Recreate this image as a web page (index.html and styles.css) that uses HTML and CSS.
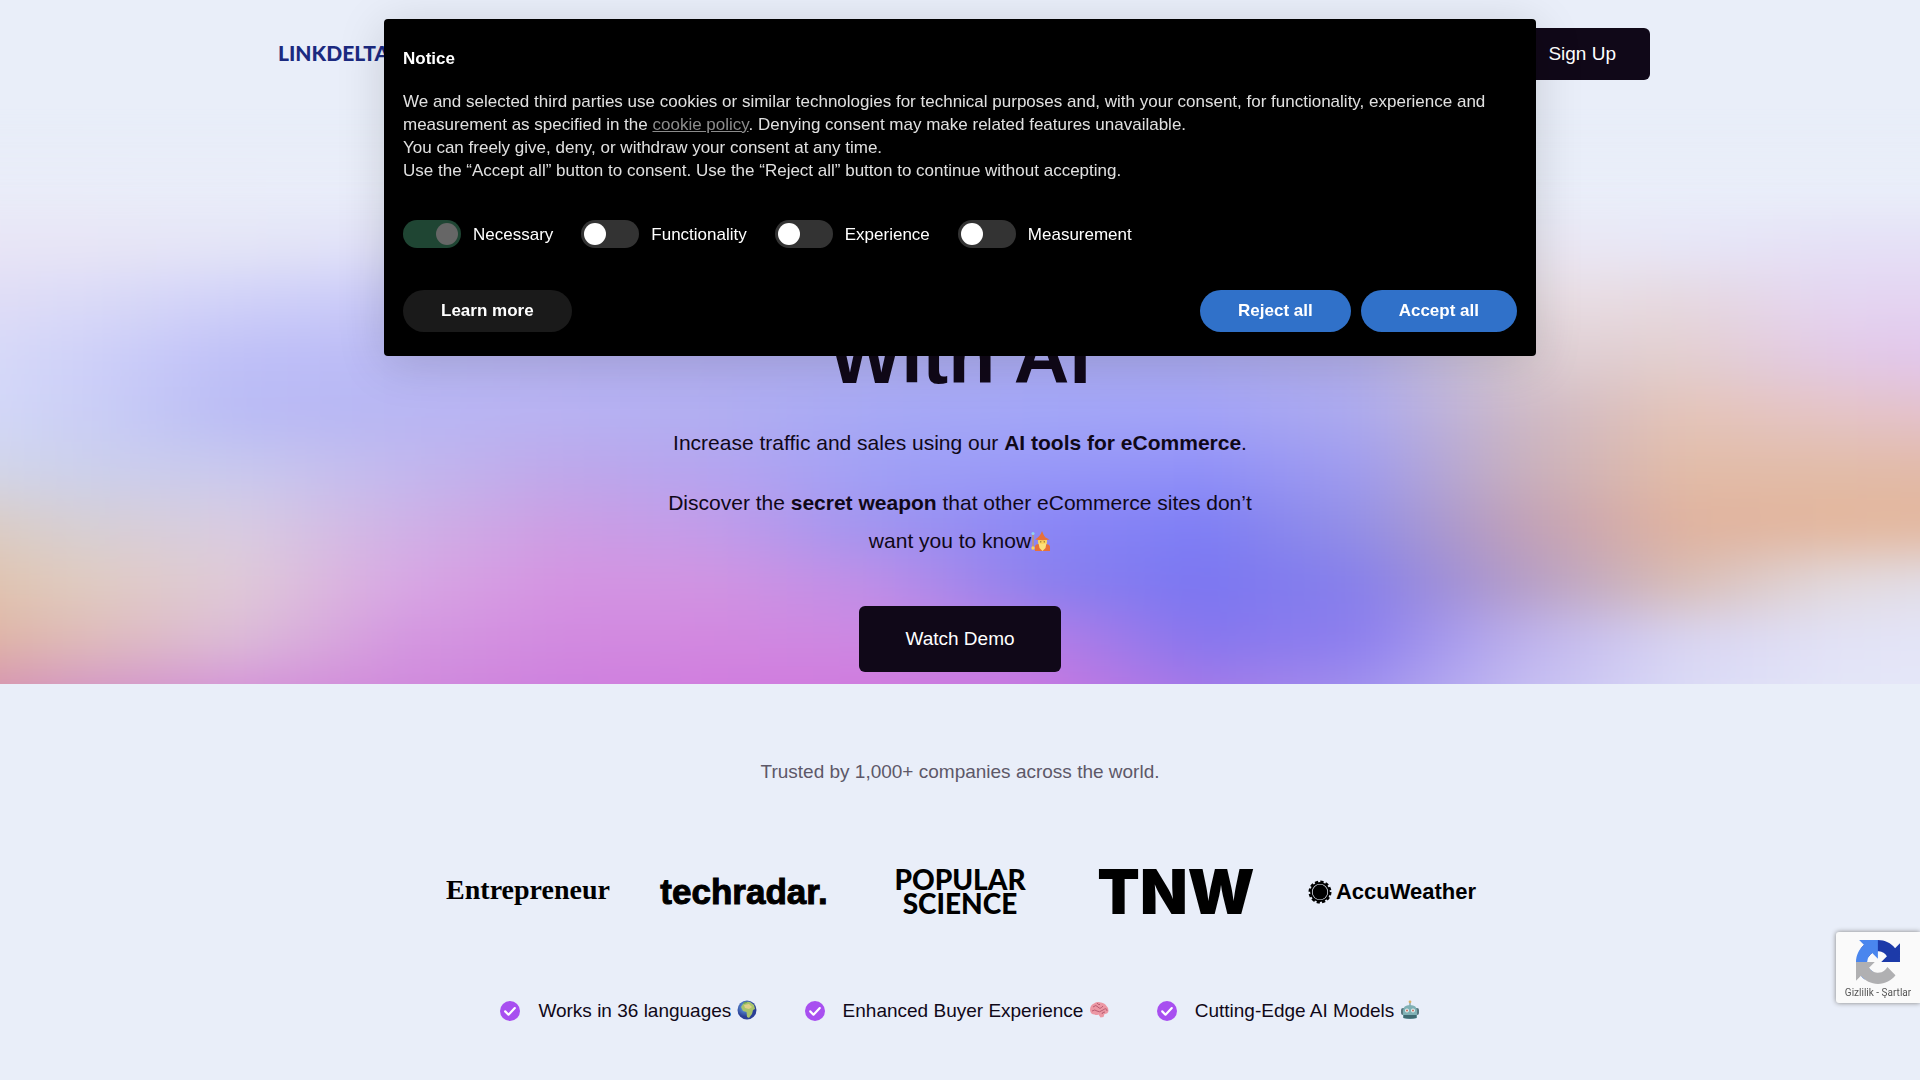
FILE: index.html
```html
<!DOCTYPE html>
<html lang="en">
<head>
<meta charset="utf-8">
<title>LinkDelta</title>
<meta name="viewport" content="width=device-width, initial-scale=1">
<link rel="stylesheet" href="styles.css">
</head>
<body>
<section class="hero">
  <header class="nav">
    <a class="brand" href="#">LINKDELTA</a>
    <a class="btn btn-nav" href="#">Sign Up</a>
  </header>
  <div class="hero-copy">
    <h1>With AI</h1>
    <p>Increase traffic and sales using our <strong>AI tools for eCommerce</strong>.</p>
    <p>Discover the <strong>secret weapon</strong> that other eCommerce sites don’t want you to know<svg class="emoji" viewBox="0 0 20 20" role="img" aria-label="Mage"><path d="M2 3v16" stroke="#c99a5b" stroke-width="1.3"/><circle cx="2" cy="2.500" r="1.600" fill="#8fd0f0"/><path d="M4 20v-4q0-3 4-3h6q5 0 5 3v4z" fill="#e8703a"/><circle cx="11.500" cy="10.500" r="4.600" fill="#fcd35c"/><path d="M7.500 12q4 2 8 0l-1 5-3 3-3-3z" fill="#fbe07a"/><path d="M4 8.500Q9 6 11 0q2 5 3.500 6.500 2 1 4 2Q12 10 4 8.500z" fill="#e8703a"/><circle cx="9.800" cy="10.800" r=".6" fill="#5b3a1a"/><circle cx="13.200" cy="10.800" r=".6" fill="#5b3a1a"/><circle cx="2" cy="17" r="1.700" fill="#fcd35c"/></svg></p>
    <a class="btn btn-demo" href="#">Watch Demo</a>
  </div>
</section>

<section class="trust">
  <p class="trust-note">Trusted by 1,000+ companies across the world.</p>
  <div class="logos">
    <span class="logo entrepreneur">Entrepreneur</span>
    <span class="logo techradar">techradar.</span>
    <span class="logo popsci">POPULAR<br>SCIENCE</span>
    <span class="logo tnw">TNW</span>
    <span class="logo accu"><svg viewBox="0 0 24 24" aria-hidden="true"><circle cx="12" cy="12" r="10.200" fill="none" stroke="#000" stroke-width="2.600" stroke-dasharray="3.200 2.140"/><circle cx="12" cy="12" r="9" fill="none" stroke="#000" stroke-width="1.800"/><circle cx="12" cy="12" r="7.400"/></svg>AccuWeather</span>
  </div>
  <ul class="features">
    <li><svg class="check" viewBox="0 0 20 20" aria-hidden="true"><circle cx="10" cy="10" r="10" fill="#a84ff0"/><path d="M5.200 10.400l3.300 3.300 6.300-6.600" fill="none" stroke="#fff" stroke-width="2.200" stroke-linecap="round" stroke-linejoin="round"/></svg>
      <span>Works in 36 languages <svg class="emoji" viewBox="0 0 20 20" role="img" aria-label="Globe"><defs><radialGradient id="sea" cx=".4" cy=".35"><stop offset="0" stop-color="#6fb4f0"/><stop offset="1" stop-color="#2b3f96"/></radialGradient></defs><circle cx="10" cy="10" r="9.500" fill="url(#sea)"/><path d="M6 4q3-3 7-2l4 3 1 4-2 1-1 4-3 4-2-1-.5-5-3.500-1-2-4z" fill="#a9c46a"/><path d="M7 5l5-1 3 3-3 2-4-1z" fill="#e0d08a"/><path d="M6 3l3-1.500 1.500 1L7 4z" fill="#6fa552"/></svg></span></li>
    <li><svg class="check" viewBox="0 0 20 20" aria-hidden="true"><circle cx="10" cy="10" r="10" fill="#a84ff0"/><path d="M5.200 10.400l3.300 3.300 6.300-6.600" fill="none" stroke="#fff" stroke-width="2.200" stroke-linecap="round" stroke-linejoin="round"/></svg>
      <span>Enhanced Buyer Experience <svg class="emoji" viewBox="0 0 20 20" role="img" aria-label="Brain"><path d="M1 10q0-5 4-6.500 3-2.200 7-1 4 .5 5.500 3.500 2.500 2 2 5-.5 3-4 3l-1 3-3 .5-2-3q-2 1-4 0-4 0-4.500-4.500z" fill="#ec97a4"/><path d="M4 7q3-3 5 0t5-1M3 11q3-2 5 0t6-1 4 1M8 3q1 2 3 1.500M13 14q0-2 3-2" fill="none" stroke="#b85c72" stroke-width="1"/></svg></span></li>
    <li><svg class="check" viewBox="0 0 20 20" aria-hidden="true"><circle cx="10" cy="10" r="10" fill="#a84ff0"/><path d="M5.200 10.400l3.300 3.300 6.300-6.600" fill="none" stroke="#fff" stroke-width="2.200" stroke-linecap="round" stroke-linejoin="round"/></svg>
      <span>Cutting-Edge AI Models <svg class="emoji" viewBox="0 0 20 20" role="img" aria-label="Robot"><path d="M10 1v5" stroke="#8aa" stroke-width="1.500"/><circle cx="10" cy="1.800" r="1.400" fill="#d9b36a"/><rect x="1" y="8" width="18" height="7" rx="2" fill="#58777f"/><path d="M3 18V11q0-6 7-6t7 6v7q-7 2-14 0z" fill="#7fb0b4"/><path d="M3.500 15h13v3q-6.500 1.500-13 0z" fill="#3f6a72"/><circle cx="7" cy="10.500" r="2" fill="#e6f4f4"/><circle cx="13" cy="10.500" r="2" fill="#e6f4f4"/><circle cx="7" cy="10.500" r=".9" fill="#c75a4a"/><circle cx="13" cy="10.500" r=".9" fill="#c75a4a"/></svg></span></li>
  </ul>
</section>

<div class="notice" role="dialog" aria-labelledby="notice-title">
  <h2 id="notice-title">Notice</h2>
  <p>We and selected third parties use cookies or similar technologies for technical purposes and, with your consent, for functionality, experience and measurement as specified in the <a href="#">cookie policy</a>. Denying consent may make related features unavailable.<br>
  You can freely give, deny, or withdraw your consent at any time.<br>
  Use the “Accept all” button to consent. Use the “Reject all” button to continue without accepting.</p>
  <div class="toggles">
    <label><input type="checkbox" checked disabled>Necessary</label>
    <label><input type="checkbox">Functionality</label>
    <label><input type="checkbox">Experience</label>
    <label><input type="checkbox">Measurement</label>
  </div>
  <div class="actions">
    <button type="button" class="more">Learn more</button>
    <button type="button">Reject all</button>
    <button type="button">Accept all</button>
  </div>
</div>

<aside class="captcha">
  <svg viewBox="0 0 64 64" aria-hidden="true">
    <path d="M64 31.955l-.033-1.370V4.687l-7.160 7.160C50.948 4.674 42.033.093 32.050.093c-10.400 0-19.622 4.960-25.458 12.640l11.736 11.860a15.550 15.550 0 0 1 4.754-5.334c2.050-1.600 4.952-2.906 8.968-2.906.485 0 .86.057 1.135.163 4.976.393 9.288 3.140 11.828 7.124l-8.307 8.307L64 31.953" fill="#1c3aa9"/>
    <path d="M31.862.094l-1.370.033H4.594l7.160 7.160C4.580 13.147 0 22.060 0 32.046c0 10.400 4.960 19.622 12.640 25.458L24.500 45.768a15.550 15.550 0 0 1-5.334-4.754c-1.600-2.050-2.906-4.952-2.906-8.968 0-.485.057-.86.163-1.135.393-4.976 3.140-9.288 7.124-11.828l8.307 8.307L31.860.095" fill="#4a86ee"/>
    <path d="M.001 32.045l.033 1.370v25.898l7.160-7.160c5.860 7.173 14.774 11.754 24.760 11.754 10.400 0 19.622-4.960 25.458-12.640l-11.736-11.860a15.550 15.550 0 0 1-4.754 5.334c-2.050 1.600-4.952 2.906-8.968 2.906-.485 0-.86-.057-1.135-.163-4.976-.393-9.288-3.140-11.828-7.124l8.307-8.307c-10.522.04-22.400.066-27.295-.005" fill="#b0b0b2"/>
  </svg>
  <div><a href="#">Gizlilik</a> - <a href="#">Şartlar</a></div>
</aside>
</body>
</html>
```
FILE: styles.css
```css
* { box-sizing: border-box; }

body {
  margin: 0;
  background: #e9eef9;
  color: #100818;
  font-family: "Liberation Sans", Arial, sans-serif;
  font-size: 19px;
}

a { color: inherit; text-decoration: none; }

/* Hero */
.hero {
  position: relative;
  overflow: hidden;
  isolation: isolate;
  padding-bottom: 12px;
}

/* Soft colour mesh: stacked 56px bands, blurred into one another */
.hero::before {
  content: "";
  position: absolute;
  z-index: -1;
  inset: 162px -80px -94px;
  filter: blur(24px);
  background-repeat: no-repeat;
  background-size: 100% 56px;
  background-position: 0 0, 0 56px, 0 112px, 0 168px, 0 224px, 0 280px, 0 336px, 0 392px, 0 448px, 0 504px, 0 560px;
  background-image:
    linear-gradient(90deg, #e9ecf8, #e9edf9, #e9eef9, #e9eef9),
    linear-gradient(90deg, #e9e4f5, #e8e5f6, #e4e5f7, #e1e1f8, #e0e0f8, #e0e0f8, #e0e0f8, #e0e0f8, #e0e0f8, #e2e2f6, #ebe8f3, #e7e6f7, #e5e0f6, #e5dff6),
    linear-gradient(90deg, #e3def5, #dadaf7, #cfd0f8, #c8c8f8, #c4c4f6, #c0c0f6, #c0c0f6, #c0c0f6, #c0c0f6, #d0ccf0, #eadfe4, #e6d8df, #e4d5f1, #e4d2f2),
    linear-gradient(90deg, #dcdff9, #cfd1f9, #bebff7, #babaf6, #b8b4f4, #b4b0f4, #b0b0f4, #acacf6, #acacf4, #b4b0ee, #dccdd4, #e3cfcf, #e3c9e6, #e0c4f0),
    linear-gradient(90deg, #d8def8, #cbcff6, #b9bbf5, #b8b6f3, #b8b2f2, #b0aef1, #a6a8f5, #a2a6f7, #a2a2f7, #acaaee, #ccb8c6, #e4c4b8, #e4c4c6, #e4c0d0),
    linear-gradient(90deg, #d6dae8, #ccd0ec, #c8c8ee, #c2b8ee, #bea8ea, #b4a4f0, #a0a0f6, #9898f8, #9090f8, #a09cee, #c8b0be, #e2bca8, #e2bca8, #e2b8a8),
    linear-gradient(90deg, #decbba, #d6cfd4, #d8cce2, #cfb2e6, #cc9ee4, #c09cea, #9e94f0, #8a86f6, #7e7ef5, #9490e6, #c0a0b8, #e0b29e, #e3b59a, #e3b89e),
    linear-gradient(90deg, #e0bea4, #e0ccc0, #dfcad8, #d8a8e4, #d494e2, #d094e2, #bc8ee8, #8a80ee, #7a76f2, #8780ea, #b49cc6, #d8bcb4, #e2dade, #e2e0ee),
    linear-gradient(90deg, #e0b098, #dfbcb8, #dcbcd8, #d498e0, #d28ae0, #d288e0, #cc88e2, #b47ee6, #8676ee, #8c7eee, #bcb0ec, #d8d4f2, #e2e2f6, #e4e6f8),
    linear-gradient(90deg, #d890a0, #d498c4, #d494d8, #d08adc, #ce80de, #d07cde, #d07ade, #c878e0, #a478e8, #a090ee, #c4bcf2, #dadaf6, #e4e6f8, #e6e8f8),
    linear-gradient(90deg, #d27ab0, #d27cc8, #d280dc, #ce7edc, #ce78de, #d074de, #d274de, #d070de, #b874e4, #b09cee, #ccc4f4, #dedef8, #e6e8f8, #e6e8f8);
}

.nav {
  display: flex;
  align-items: center;
  justify-content: space-between;
  width: calc(100% - 96px);
  max-width: 1380px;
  height: 108px;
  margin: 0 auto;
  padding-left: 8px;
}

.brand {
  font-family: Lato, "Open Sans", sans-serif;
  font-size: 21px;
  font-weight: 900;
  line-height: 24px;
  padding-bottom: 2px;
  color: #1b2a80;
}

.btn {
  display: inline-block;
  border-radius: 6px;
  background: #100818;
  color: #fff;
  text-align: center;
}

.btn-nav { padding: 0 34px; line-height: 52px; }
.btn-demo { padding: 0 46px; line-height: 66px; margin-top: 24px; vertical-align: top; }

.hero-copy {
  max-width: 620px;
  margin: 0 auto;
  padding-top: 204px;
  text-align: center;
}

h1 {
  margin: 0 0 24px;
  font-size: 77px;
  line-height: 88px;
}

.hero-copy p {
  margin: 0 0 22px;
  padding: 0 8px;
  font-size: 21px;
  line-height: 38px;
}

.emoji {
  width: 20px;
  height: 20px;
  vertical-align: -3px;
}

/* Trust strip */
.trust { padding: 74px 24px 48px; }

.trust-note {
  margin: 0;
  text-align: center;
  line-height: 28px;
  color: #5d5868;
}

.logos {
  display: grid;
  grid-template-columns: repeat(5, 1fr);
  max-width: 1080px;
  height: 64px;
  margin: 74px auto 72px;
  place-items: center;
}

.logo { color: #000; font-weight: 700; white-space: nowrap; }
.entrepreneur { font-family: "Liberation Serif", serif; font-size: 28px; padding-bottom: 4px; }
.techradar { font-size: 35px; -webkit-text-stroke: 1px #000; }
.popsci { font-family: Lato, sans-serif; font-size: 28px; font-weight: 900; line-height: 24px; padding-bottom: 2px; text-align: center; }
.tnw { font-family: Inter, sans-serif; font-size: 62px; font-weight: 900; line-height: 64px; }
.accu { display: flex; align-items: center; gap: 4px; font-size: 22px; }
.accu svg { width: 24px; height: 24px; }

.features {
  display: flex;
  flex-wrap: wrap;
  justify-content: center;
  gap: 24px 48px;
  margin: 0;
  padding: 0;
  list-style: none;
  line-height: 30px;
}

.features li { display: flex; align-items: center; gap: 18px; }
.check { width: 20px; height: 20px; }

/* Consent dialog */
.notice {
  position: fixed;
  z-index: 10;
  top: 19px;
  left: 20%;
  width: 60%;
  padding: 28px 19px 24px;
  border-radius: 4px;
  background: #000;
  color: #fff;
  font-size: 17px;
  line-height: 23px;
  box-shadow: 0 8px 48px rgba(0, 0, 0, .15);
}

.notice h2 { margin: 0 0 20px; font-size: 17px; }
.notice p { margin: 0; color: #e0e0e0; }
.notice p a { color: #8c8c8c; text-decoration: underline; }

.toggles { display: flex; flex-wrap: wrap; gap: 12px 28px; margin: 38px 0 42px; }
.toggles label { display: flex; align-items: center; gap: 12px; }

.toggles input {
  appearance: none;
  width: 58px;
  height: 28px;
  margin: 0;
  padding: 3px;
  border-radius: 14px;
  background: #333;
}

.toggles input::before {
  content: "";
  display: block;
  width: 22px;
  height: 22px;
  border-radius: 50%;
  background: #fff;
}

.toggles input:checked { background: #1f4533; }
.toggles input:checked::before { margin-left: auto; background: #666; }

.actions { display: flex; gap: 10px; }

.actions button {
  padding: 0 38px;
  border: 0;
  border-radius: 21px;
  background: #3071c9;
  color: #fff;
  font: bold 17px/42px "Liberation Sans", Arial, sans-serif;
}

.actions .more { margin-right: auto; background: #1a1a1a; }

/* reCAPTCHA badge */
.captcha {
  position: fixed;
  right: 0;
  bottom: 77px;
  width: 84px;
  height: 71px;
  padding-top: 8px;
  border-radius: 3px 0 0 3px;
  background: #fafafa;
  box-shadow: 0 0 5px #808080;
  text-align: center;
  color: #555;
  font: 10px/12px Roboto, sans-serif;
}

.captcha svg { display: block; width: 44px; height: 44px; margin: 0 auto 3px; }
```
